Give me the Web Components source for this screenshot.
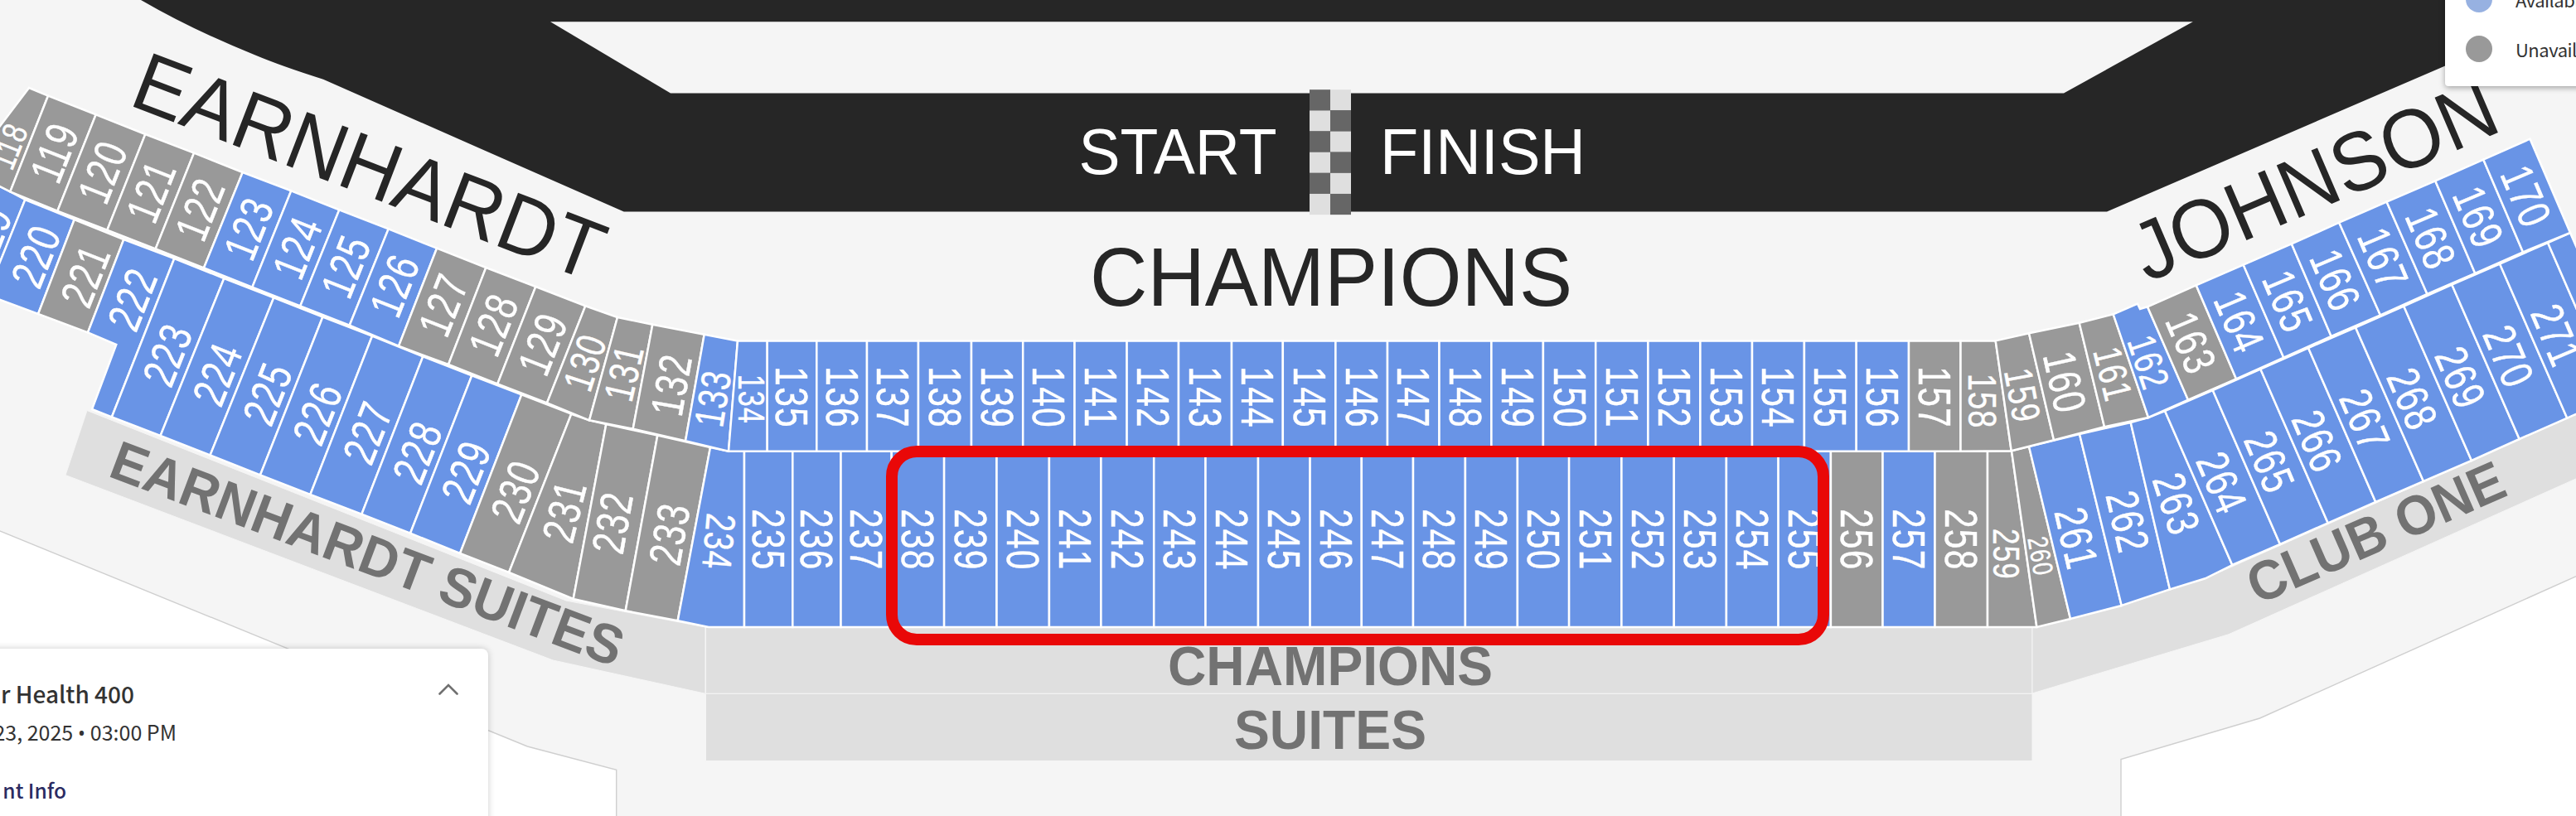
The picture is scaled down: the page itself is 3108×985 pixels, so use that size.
<!DOCTYPE html>
<html lang="en">
<head>
<meta charset="utf-8">
<title>Seat map</title>
<style>
    html, body {
        margin: 0;
        height: 100%;
        overflow: hidden;
        background: #ffffff;
    }
    .dot {
        font-family: "Open Sans", "Noto Sans", sans-serif;
    }
</style>
</head>
<body>
<seat-map>
    <map-legend slot="legend">
        <legend-item color="#97b1e1">Available</legend-item>
        <legend-item color="#999999">Unavailable</legend-item>
    </map-legend>
    <event-card slot="event">
        <span slot="title">r Health 400</span>
        <span slot="date">23, 2025 <span class="dot">•</span> 03:00 PM</span>
        <span slot="link">nt Info</span>
    </event-card>
</seat-map>

<script>
// Dividers of each row: [top x, top y, bottom x, bottom y]
const LOWER_LEFT = [
    [35, 106, -40, 205], [58, 115.7, 12.3, 231.3], [115.7, 138.3, 69.3, 254.7], [175.3, 162, 129.3, 277.7],
    [234, 184.7, 187.7, 300.3], [292.7, 208, 246, 323.3], [351.3, 230.3, 304.3, 346.7],
    [409.3, 253.3, 362.3, 369.3], [468.7, 276.3, 421.7, 392.7], [527, 299.7, 481, 417.7],
    [586.3, 323, 541, 440], [646.3, 346, 600.3, 463.3], [706.3, 369.3, 660, 486.3],
    [745, 383, 711, 507.3], [787.3, 391.7, 763.7, 517.7], [849.7, 403.7, 827, 532.3],
    [890, 411.4, 879, 544.8]
];
const LOWER_MIDDLE = [
    925.7, 985.3, 1046, 1108, 1172, 1234.2, 1296.5, 1359.6, 1422, 1486, 1547.8, 1611.4, 1674,
    1736.5, 1799.4, 1861.9, 1925.2, 1988.4, 2051.4, 2114, 2176.9, 2239.7, 2303, 2365.5
].map(x => [x, 411.4, x, 544.8]);
const LOWER_RIGHT = [
    [2407.7, 411.4, 2426.7, 544.2], [2448, 402.3, 2478, 531.3], [2508.7, 389.7, 2539, 515.3],
    [2549.7, 379.3, 2592, 504], [2591, 370.3, 2640, 482.7], [2649.7, 344.3, 2698, 457.3],
    [2706.7, 319.7, 2755.3, 431.7], [2764.8, 294.3, 2812.7, 406], [2822.2, 268.7, 2872, 380.5],
    [2879.6, 243.7, 2928.5, 355], [2938.2, 218.3, 2986.3, 330], [2996.3, 192.7, 3044, 304.3],
    [3052.5, 167.7, 3101, 281]
];
const UPPER_LEFT = [
    [-30, 211, -76, 332], [30.3, 241, -16, 356], [89.7, 265, 46, 379], [149.3, 289, 106, 401.3],
    [210.3, 312, 134.9, 503.3], [270.3, 336, 193.5, 526], [330.3, 359.3, 253.5, 549.5],
    [389.3, 382.7, 314, 573.3], [449, 405.7, 374.3, 597], [510.3, 430.3, 436.3, 620.7],
    [569.3, 453.3, 495, 643.7], [629.3, 476.3, 555, 668], [689.3, 499.7, 614, 691],
    [731.3, 512, 691.7, 723], [793.3, 525.5, 754.7, 737.3], [857, 540, 817.7, 749.3]
];
const UPPER_MIDDLE = [
    898, 956.3, 1014.5, 1075.7, 1139.1, 1202.5, 1265.9, 1328.4, 1392.2, 1454.5, 1518, 1580.6, 1642.8,
    1705, 1767.9, 1830.9, 1893.1, 1956.4, 2019.7, 2082.9, 2145.6, 2208.9, 2271.5, 2334.5, 2398
].map(x => [x, 544.8, x, 757]);
const UPPER_RIGHT = [
    [2427, 544.2, 2457.4, 757], [2448, 539, 2498, 747], [2509, 524, 2559.7, 731], [2570.7, 510, 2618, 711.5],
    [2612, 496, 2693.3, 682], [2669.7, 471, 2751, 657], [2727.3, 445.5, 2808.7, 631.3],
    [2785, 420, 2866.3, 606], [2842, 395.3, 2924, 581], [2900.3, 369.7, 2982, 556],
    [2958.3, 343.7, 3039.7, 530], [3016, 318.5, 3097.3, 504.7], [3074, 293, 3155, 479],
    [3101, 281, 3182, 467]
];

// Corners that fall between two dividers
const EXTRA_TOP = {
    162: [[2579, 366.7], [2582, 373]],
    219: [[0, 225], [12.3, 231.3]],
    231: [[711, 507.3]],
    234: [[879, 544.8]],
    263: [[2592, 504]]
};
const EXTRA_BOTTOM = {
    222: [[111, 494], [140.3, 416]],
    234: [[855, 757]],
    263: [[2660.7, 698.3]]
};

const UNAVAILABLE = new Set([
    118, 119, 120, 121, 122, 127, 128, 129, 130, 131, 132, 157, 158, 159, 160, 161, 163,
    221, 230, 231, 232, 233, 256, 258, 259, 260
]);

// Labels outside the straight: [x, y, angle, size]
const LABELS = {
    118: [11, 177, -68.5, 42], 119: [65.7, 185, -68.5], 120: [123.7, 208.3, -68.5], 121: [182.3, 231.7, -68.5],
    122: [241.3, 253.3, -68.5], 123: [300, 276.7, -68.5], 124: [358.7, 299.7, -68.5],
    125: [417.3, 322.3, -68.5], 126: [476, 345.3, -68.5], 127: [534.7, 368.8, -68.5],
    128: [595.3, 392.7, -68.5], 129: [654.7, 416, -68.5], 130: [705.7, 438.3, -72, 50],
    131: [752.7, 450.7, -77, 50], 132: [810, 465.3, -80], 133: [860, 481.7, -81, 50], 134: [906.3, 481.3, 90, 44],
    158: [2392, 483.5, 90, 49], 159: [2440, 476.7, 79.5, 48], 160: [2491, 460.7, 77.5], 161: [2549, 451, 76, 48],
    162: [2592, 436.7, 71.5, 48], 163: [2643.3, 413.3, 67], 164: [2701.5, 388, 67], 165: [2760, 363, 67],
    166: [2817.3, 337.5, 67], 167: [2875, 311.5, 67], 168: [2932.5, 287, 67], 169: [2989.8, 261.5, 67],
    170: [3047.5, 236.3, 67],
    219: [-15.4, 287.5, -68.5], 220: [43.3, 310, -68.5], 221: [103, 333.5, -68.5], 222: [159.7, 362, -68.5],
    223: [202, 429, -68.5], 224: [262.3, 452.3, -68.5], 225: [322.7, 476, -68.5], 226: [383, 499.6, -68.5],
    227: [443.5, 523, -68.5], 228: [503.5, 546.7, -68.5], 229: [562.3, 570.3, -68.5], 230: [621.7, 594, -68.5],
    231: [681, 617.7, -76], 232: [739, 631.7, -80], 233: [807.7, 645.3, -80], 234: [867.3, 653.3, 95, 50],
    259: [2420.7, 668.3, 90, 45], 260: [2461.7, 670.7, 80, 34], 261: [2505, 649.3, 77], 262: [2567, 629.3, 77],
    263: [2625.7, 607.7, 72], 264: [2680.3, 582.3, 67], 265: [2738, 557, 67], 266: [2795.5, 532, 67],
    267: [2853, 506.5, 67], 268: [2910.3, 481, 67], 269: [2968.3, 455.3, 67], 270: [3026.3, 429.7, 67],
    271: [3084, 404, 67]
};

const LABEL_SIZE = 55;

function drawSection(id, left, right) {
    const points = [
        [left[0], left[1]],
        ...(EXTRA_TOP[id] || []),
        [right[0], right[1]],
        [right[2], right[3]],
        ...(EXTRA_BOTTOM[id] || []),
        [left[2], left[3]]
    ];
    const state = UNAVAILABLE.has(id) ? 'off' : 'on';
    return `<polygon class="${state}" points="${points.map(p => p.join(',')).join(' ')}"/>`;
}

function drawLabel(id, left, right) {
    const row = id < 200 ? 479 : 650.6;
    const [x, y, angle, size = LABEL_SIZE] = LABELS[id] || [(left[0] + right[0]) / 2, row, 90];
    return `<text class="label" font-size="${size}" transform="translate(${x} ${y}) rotate(${angle}) scale(0.775 1)" x="0.8" y="${(size * 0.345).toFixed(1)}">${id}</text>`;
}

function drawRow(first, dividers) {
    let shapes = '';
    let labels = '';
    for (let i = 0; i < dividers.length - 1; i++) {
        const id = first + i;
        shapes += drawSection(id, dividers[i], dividers[i + 1]);
        // 272 is only a sliver at the edge and has no label
        if (id < 272) {
            labels += drawLabel(id, dividers[i], dividers[i + 1]);
        }
    }
    return shapes + labels;
}

function drawFlag() {
    let cells = '';
    for (let i = 0; i < 12; i++) {
        const col = i % 2;
        const row = (i - col) / 2;
        const fill = (row + col) % 2 ? '#dfdfdf' : '#666666';
        cells += `<rect x="${1580 + col * 25}" y="${108.2 + row * 25.15}" width="25" height="25.2" fill="${fill}"/>`;
    }
    return cells;
}

class SeatMap extends HTMLElement {
    connectedCallback() {
        this.attachShadow({ mode: 'open' });
        this.shadowRoot.innerHTML = `
            <style>
                :host {
                    display: block;
                    position: relative;
                    width: 3108px;
                    height: 985px;
                    overflow: hidden;
                    background: #f5f5f5;
                }
                svg {
                    display: block;
                    font-family: "Liberation Sans", Arial, sans-serif;
                }
                .on { fill: #6994e6; }
                .off { fill: #999999; }
                .on, .off {
                    stroke: #ffffff;
                    stroke-width: 2.5;
                }
                .label {
                    fill: #ffffff;
                    stroke: #ffffff;
                    stroke-width: 0.4;
                    letter-spacing: 1.5px;
                    text-anchor: middle;
                }
                .outside {
                    fill: #ffffff;
                    stroke: #cfcfcf;
                    stroke-width: 1.4;
                }
                .track { fill: #262626; }
                .suite {
                    fill: #dfdfdf;
                    stroke: #f5f5f5;
                    stroke-width: 1;
                }
                .stand {
                    fill: #262626;
                    font-size: 100.3px;
                }
                .start {
                    fill: #ffffff;
                    font-size: 78.5px;
                }
                .suite-name {
                    fill: #727272;
                    font-size: 66.8px;
                    font-weight: bold;
                }
                .marker {
                    fill: none;
                    stroke: #e90808;
                    stroke-width: 14;
                }
                .legend, .event {
                    position: absolute;
                }
                .legend {
                    top: -60px;
                    left: 2950px;
                }
                .event {
                    top: 783px;
                    left: -20px;
                }
            </style>
            <svg width="3108" height="985" viewBox="0 0 3108 985">
                <polygon class="outside" points="-10,637 636.3,901 743.7,929.3 743.7,1000 -10,1000"/>
                <polygon class="outside" points="3120,690.3 2726.5,867 2559,916.5 2559,1000 3120,1000"/>

                <path class="track" d="M170 0 Q232 36 306.7 66 Q340 80 390 95.7 L581 180 L752.7 255.5 H2542 L2949 80 L3132 0 Z"/>
                <polygon fill="#f5f5f5" points="664,26.3 2645.8,26.3 2490,112.5 809,112.5"/>
                ${drawFlag()}
                <text class="start" x="1301.5" y="210" textLength="239" lengthAdjust="spacingAndGlyphs">START</text>
                <text class="start" x="1665" y="210" textLength="248" lengthAdjust="spacingAndGlyphs">FINISH</text>

                <polygon class="suite" points="105,495.5 79,573.5 667.3,797 851,837.3 851,757 683,725"/>
                <polygon class="suite" points="851.5,757 2452,757 2452,837.3 851.5,837.3"/>
                <polygon class="suite" points="851.5,837.3 2452,837.3 2452,918.5 851.5,918.5"/>
                <polygon class="suite" points="2452,757 2498,747 2660.7,698.3 3120,495 3120,572.5 2689,765.7 2452,837"/>

                ${drawRow(219, UPPER_LEFT.concat(UPPER_MIDDLE, UPPER_RIGHT))}
                ${drawRow(118, LOWER_LEFT.concat(LOWER_MIDDLE, LOWER_RIGHT))}

                <text class="stand" transform="translate(153.5 126) rotate(20.95)" textLength="599" lengthAdjust="spacingAndGlyphs">EARNHARDT</text>
                <text class="stand" x="1315" y="369" textLength="582" lengthAdjust="spacingAndGlyphs">CHAMPIONS</text>
                <text class="stand" transform="translate(2590.8 341.3) rotate(-23.2)" textLength="468" lengthAdjust="spacingAndGlyphs">JOHNSON</text>
                <text class="suite-name" transform="translate(128.8 574.3) rotate(20.65)" textLength="655" lengthAdjust="spacingAndGlyphs">EARNHARDT SUITES</text>
                <text class="suite-name" x="1409" y="827" textLength="392" lengthAdjust="spacingAndGlyphs">CHAMPIONS</text>
                <text class="suite-name" x="1489" y="904" textLength="232" lengthAdjust="spacingAndGlyphs">SUITES</text>
                <text class="suite-name" transform="translate(2723.7 730.3) rotate(-23.6)" textLength="332" lengthAdjust="spacingAndGlyphs">CLUB ONE</text>

                <rect class="marker" x="1076" y="545" width="1124" height="227" rx="30"/>
            </svg>
            <div class="legend"><slot name="legend"></slot></div>
            <div class="event"><slot name="event"></slot></div>
        `;
    }
}

class MapLegend extends HTMLElement {
    connectedCallback() {
        this.attachShadow({ mode: 'open' });
        this.shadowRoot.innerHTML = `
            <style>
                :host {
                    display: flex;
                    flex-direction: column;
                    justify-content: flex-end;
                    gap: 28px;
                    box-sizing: border-box;
                    width: 240px;
                    height: 164px;
                    padding: 0 25px 29px;
                    background: #ffffff;
                    border-radius: 4px;
                    box-shadow: 0 2px 7px rgba(0, 0, 0, 0.35);
                }
            </style>
            <slot></slot>
        `;
    }
}

class LegendItem extends HTMLElement {
    connectedCallback() {
        this.attachShadow({ mode: 'open' });
        this.shadowRoot.innerHTML = `
            <style>
                :host {
                    display: flex;
                    align-items: center;
                    gap: 28px;
                    height: 32px;
                    color: #333333;
                    font: 22px/32px "Noto Sans CJK SC", sans-serif;
                    letter-spacing: -0.5px;
                }
                i {
                    width: 32px;
                    height: 32px;
                    border-radius: 50%;
                    background: ${this.getAttribute('color')};
                }
            </style>
            <i></i>
            <slot></slot>
        `;
    }
}

class EventCard extends HTMLElement {
    connectedCallback() {
        this.attachShadow({ mode: 'open' });
        this.shadowRoot.innerHTML = `
            <style>
                :host {
                    display: flex;
                    justify-content: space-between;
                    box-sizing: border-box;
                    width: 609px;
                    height: 240px;
                    padding: 34px 36px 0 20px;
                    background: #ffffff;
                    border-radius: 8px;
                    box-shadow: 0 0 9px rgba(0, 0, 0, 0.2);
                    color: #333333;
                    font-family: "Noto Sans CJK SC", sans-serif;
                    line-height: 40px;
                    white-space: nowrap;
                }
                .title, .date, .link {
                    display: flex;
                    justify-content: flex-end;
                }
                .title {
                    width: 162px;
                    font-size: 28px;
                    font-weight: 500;
                }
                .date {
                    width: 213px;
                    margin-top: 6px;
                    font-size: 25px;
                }
                .link {
                    width: 80px;
                    margin-top: 30px;
                    color: #2b2b62;
                    font-size: 24.5px;
                    font-weight: 500;
                }
                svg {
                    margin-top: 7px;
                }
            </style>
            <div>
                <div class="title"><slot name="title"></slot></div>
                <div class="date"><slot name="date"></slot></div>
                <div class="link"><slot name="link"></slot></div>
            </div>
            <svg width="24" height="16" viewBox="0 0 24 16" fill="none" stroke="#707070" stroke-width="2.6" stroke-linecap="round">
                <path d="M1.5 13.5 L12 3 L22.5 13.5"/>
            </svg>
        `;
    }
}

customElements.define('seat-map', SeatMap);
customElements.define('map-legend', MapLegend);
customElements.define('legend-item', LegendItem);
customElements.define('event-card', EventCard);
</script>
</body>
</html>
